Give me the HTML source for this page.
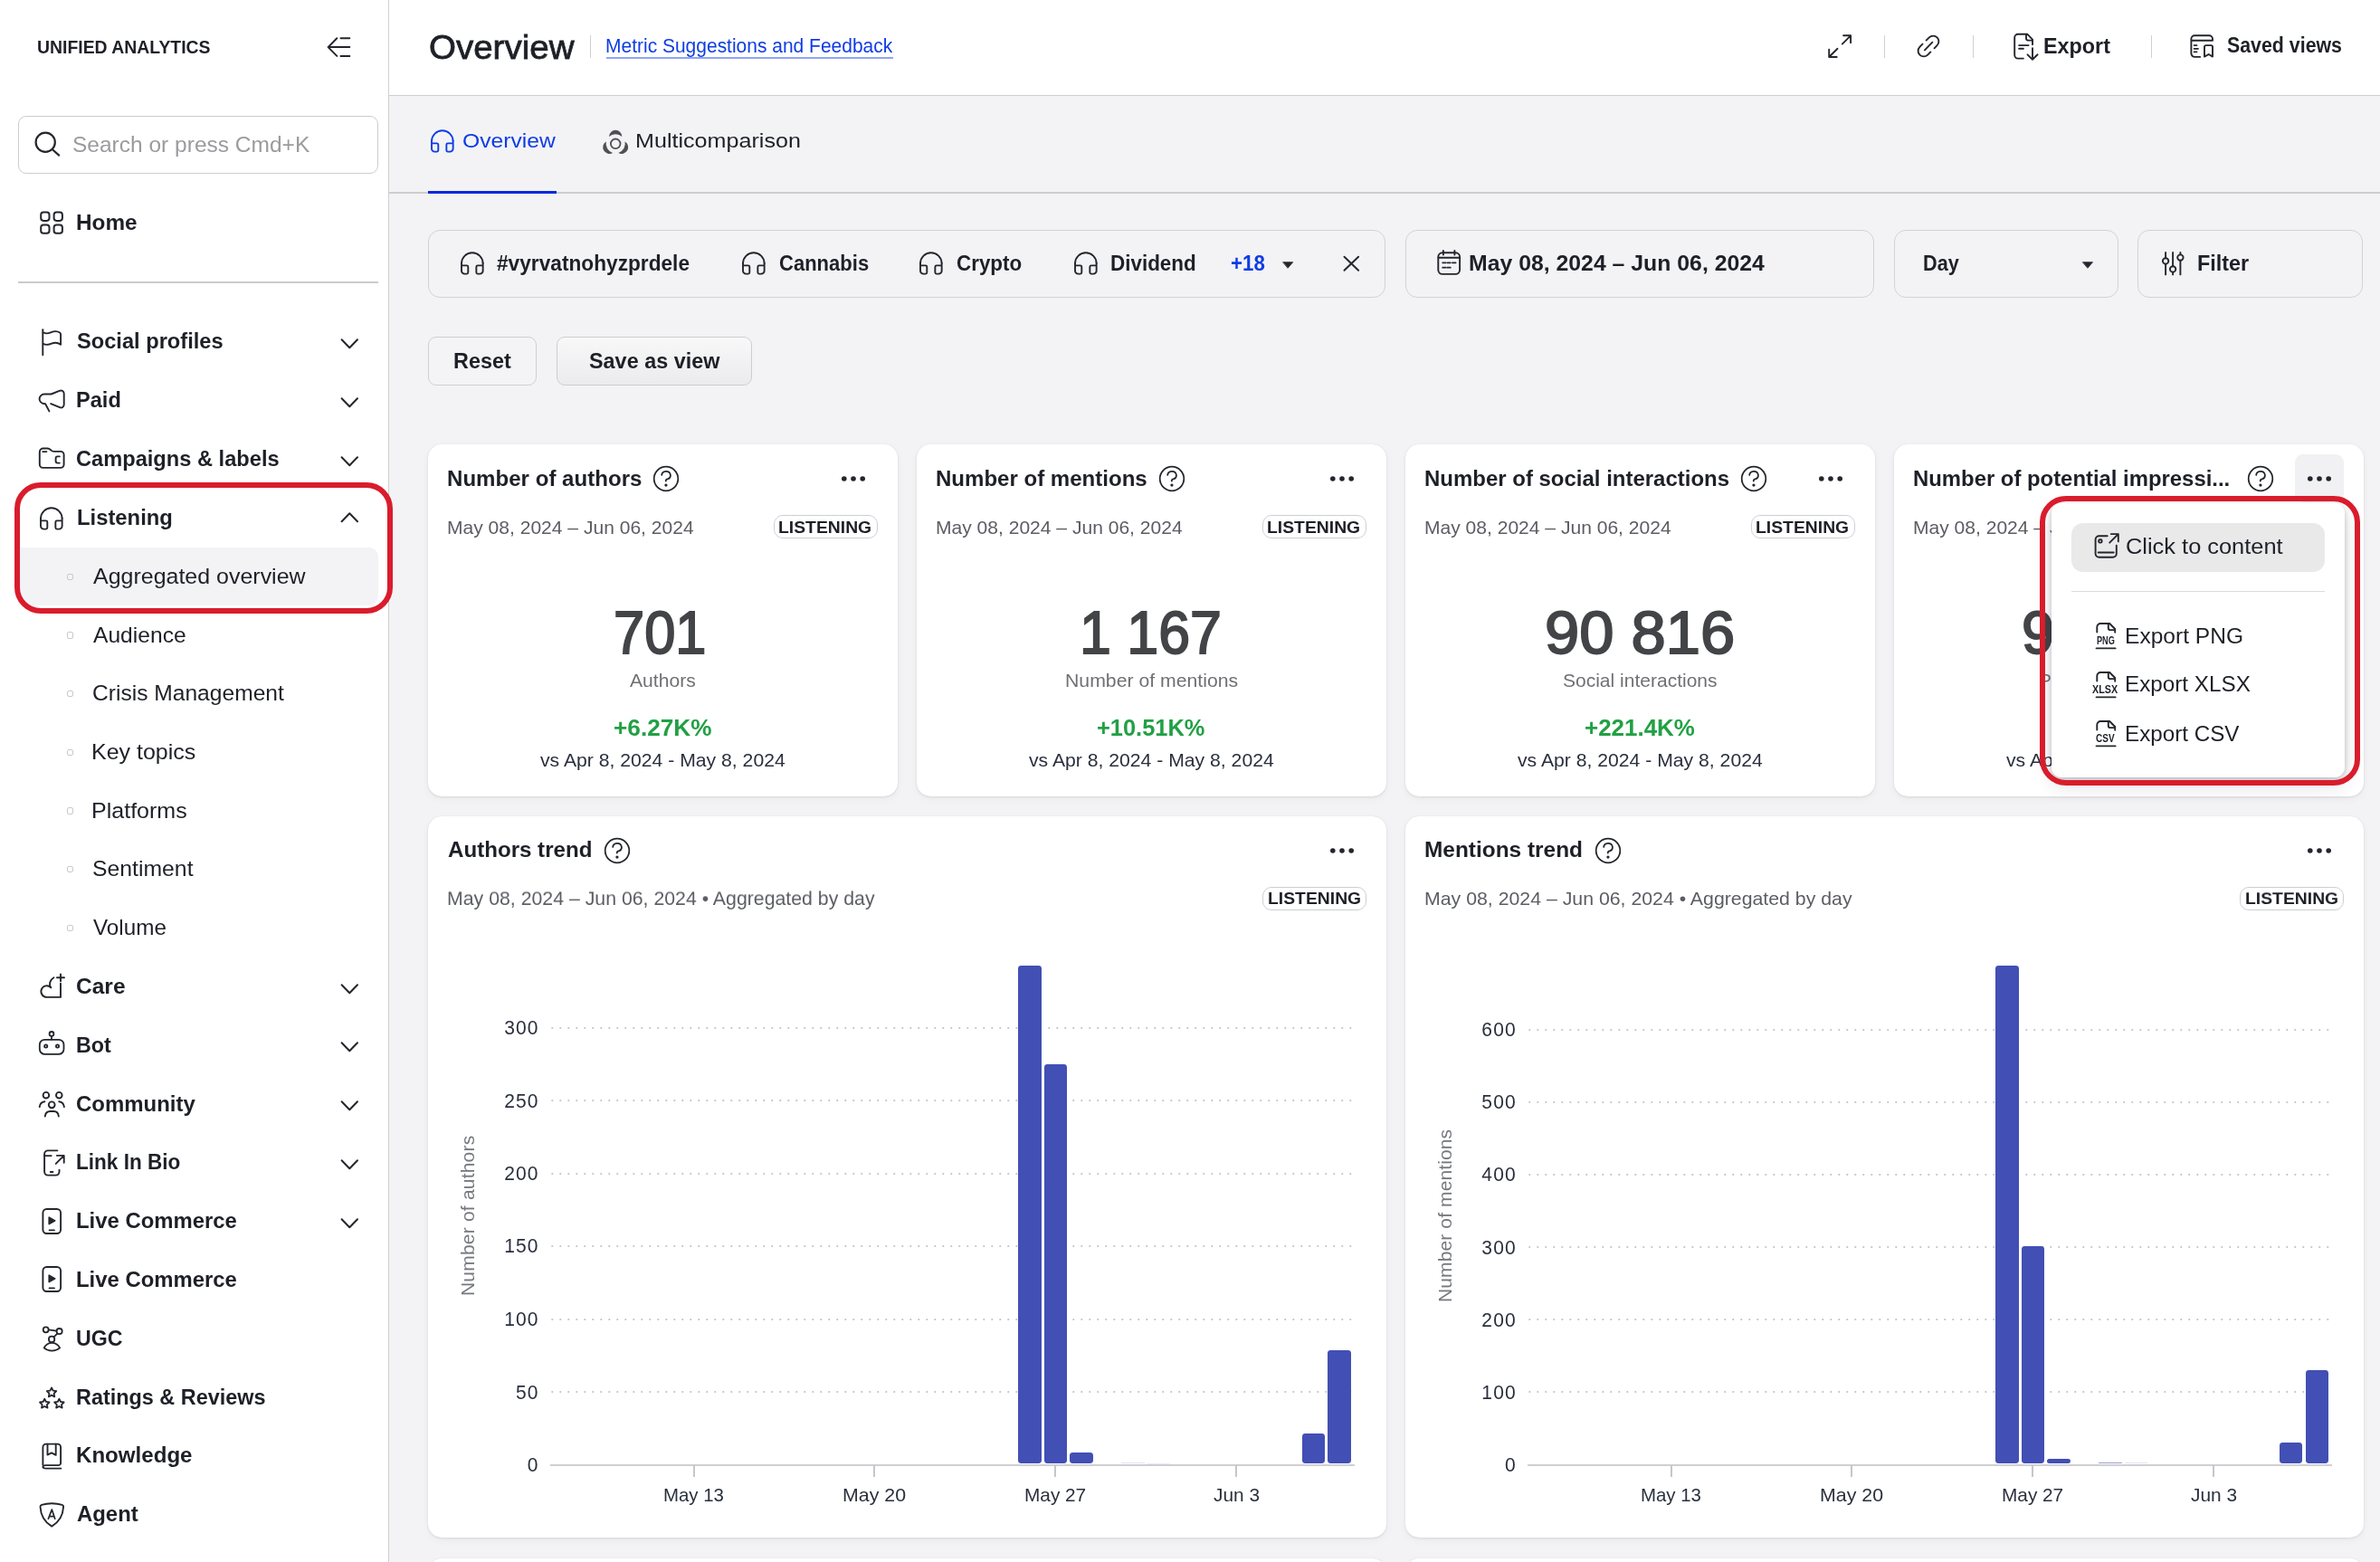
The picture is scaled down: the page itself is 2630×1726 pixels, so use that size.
<!DOCTYPE html>
<html><head><meta charset="utf-8"><title>Overview</title>
<style>
html,body{margin:0;padding:0;}
body{width:2630px;height:1726px;overflow:hidden;background:#f3f3f6;position:relative;font-family:"Liberation Sans",sans-serif;}
#root{position:absolute;left:0;top:0;width:2630px;height:1726px;overflow:hidden;will-change:transform;}
#root div,#root svg,#root span.t{position:absolute;}
span.t{white-space:nowrap;display:block;font-family:"Liberation Sans",sans-serif;}
svg{overflow:visible;}
.card{background:#fff;border-radius:15px;box-shadow:0 0 1px rgba(0,0,0,.14),0 1px 3px rgba(10,10,20,.09),0 3px 10px rgba(10,10,20,.04);}
</style></head><body><div id="root">
<div style="left:0.00px;top:0.00px;width:429.00px;height:1726.00px;background:#fff;"></div>
<div style="left:429.00px;top:0.00px;width:1.00px;height:1726.00px;background:#d0d0d0;"></div>
<div style="left:430.00px;top:0.00px;width:2200.00px;height:105.00px;background:#fff;"></div>
<div style="left:430.00px;top:105.00px;width:2200.00px;height:1.00px;background:#d0d0d0;"></div>
<div style="left:430.00px;top:212.00px;width:2200.00px;height:2.00px;background:#cdcdcd;"></div>
<div style="left:473.00px;top:211.00px;width:142.00px;height:3.00px;background:#0629de;"></div>
<span class="t" style="left:40.64px;top:42.00px;font-size:20.25px;line-height:20.25px;font-weight:700;color:#1e2027;transform:scale(0.9581,1.0000);transform-origin:0 17px;">UNIFIED ANALYTICS</span>
<svg style="left:360.00px;top:40.00px" width="30.00" height="25.00" viewBox="360.00 40.00 30.00 25.00" fill="none" stroke="#24262d" stroke-width="2" stroke-linecap="round" stroke-linejoin="round" ><path d="M362.6 52.1H386.3M372.3 42.3L362.6 52.1L372.3 61.9M376.5 42.3H386.3M376.5 61.9H386.3"/></svg>
<div style="left:20.20px;top:128.10px;width:397.40px;height:64.20px;box-sizing:border-box;border:1.3px solid #cdcdd1;border-radius:9px;background:#fff;"></div>
<svg style="left:36.00px;top:143.00px" width="32.00" height="32.00" viewBox="36.00 143.00 32.00 32.00" fill="none" stroke="#24262d" stroke-width="2.2" stroke-linecap="round" stroke-linejoin="round" ><circle cx="50.2" cy="157.2" r="10.6"/><path d="M58 165.2L65.2 171.6"/></svg>
<span class="t" style="left:79.74px;top:147.00px;font-size:25.50px;line-height:25.50px;font-weight:400;color:#9b9b9f;transform:scale(0.9613,0.9722);transform-origin:0 21px;">Search or press Cmd+K</span>
<svg style="left:42.00px;top:231.00px" width="30.00" height="30.00" viewBox="42.00 231.00 30.00 30.00" fill="none" stroke="#24262d" stroke-width="2" stroke-linecap="round" stroke-linejoin="round" ><rect x="45.2" y="234.6" width="9.3" height="9.3" rx="2.8"/><rect x="59.6" y="234.6" width="9.3" height="9.3" rx="2.8"/><rect x="45.2" y="248.4" width="9.3" height="9.3" rx="2.8"/><rect x="59.6" y="248.4" width="9.3" height="9.3" rx="2.8"/></svg>
<span class="t" style="left:84.12px;top:234.00px;font-size:24.75px;line-height:24.75px;font-weight:700;color:#1e2027;transform:scale(0.9836,1.0000);transform-origin:0 20px;">Home</span>
<div style="left:20.00px;top:311.00px;width:397.60px;height:2.00px;background:#cbcbcd;"></div>
<span class="t" style="left:85.10px;top:365.00px;font-size:24.75px;line-height:24.75px;font-weight:700;color:#1e2027;transform:scale(0.9554,1.0000);transform-origin:0 20px;">Social profiles</span>
<svg style="left:375.00px;top:371.50px" width="24.00" height="16.00" viewBox="375.00 371.50 24.00 16.00" fill="none" stroke="#24262d" stroke-width="2" stroke-linecap="round" stroke-linejoin="round" ><path d="M377.6 374.7L386.3 383.7L395 374.7"/></svg>
<span class="t" style="left:84.15px;top:430.00px;font-size:24.75px;line-height:24.75px;font-weight:700;color:#1e2027;transform:scale(0.9532,1.0000);transform-origin:0 20px;">Paid</span>
<svg style="left:375.00px;top:436.50px" width="24.00" height="16.00" viewBox="375.00 436.50 24.00 16.00" fill="none" stroke="#24262d" stroke-width="2" stroke-linecap="round" stroke-linejoin="round" ><path d="M377.6 439.7L386.3 448.7L395 439.7"/></svg>
<span class="t" style="left:84.15px;top:495.00px;font-size:24.75px;line-height:24.75px;font-weight:700;color:#1e2027;transform:scale(0.9549,1.0000);transform-origin:0 20px;">Campaigns &amp; labels</span>
<svg style="left:375.00px;top:501.50px" width="24.00" height="16.00" viewBox="375.00 501.50 24.00 16.00" fill="none" stroke="#24262d" stroke-width="2" stroke-linecap="round" stroke-linejoin="round" ><path d="M377.6 504.7L386.3 513.7L395 504.7"/></svg>
<span class="t" style="left:84.64px;top:560.00px;font-size:24.75px;line-height:24.75px;font-weight:700;color:#1e2027;transform:scale(0.9622,1.0000);transform-origin:0 20px;">Listening</span>
<svg style="left:375.00px;top:563.50px" width="24.00" height="16.00" viewBox="375.00 563.50 24.00 16.00" fill="none" stroke="#24262d" stroke-width="2" stroke-linecap="round" stroke-linejoin="round" ><path d="M377.6 575.7L386.3 566.7L395 575.7"/></svg>
<span class="t" style="left:84.21px;top:1078.00px;font-size:24.75px;line-height:24.75px;font-weight:700;color:#1e2027;transform:scale(0.9912,1.0000);transform-origin:0 20px;">Care</span>
<svg style="left:375.00px;top:1084.50px" width="24.00" height="16.00" viewBox="375.00 1084.50 24.00 16.00" fill="none" stroke="#24262d" stroke-width="2" stroke-linecap="round" stroke-linejoin="round" ><path d="M377.6 1087.7L386.3 1096.7L395 1087.7"/></svg>
<span class="t" style="left:84.26px;top:1143.00px;font-size:24.75px;line-height:24.75px;font-weight:700;color:#1e2027;transform:scale(0.9427,1.0000);transform-origin:0 20px;">Bot</span>
<svg style="left:375.00px;top:1149.30px" width="24.00" height="16.00" viewBox="375.00 1149.30 24.00 16.00" fill="none" stroke="#24262d" stroke-width="2" stroke-linecap="round" stroke-linejoin="round" ><path d="M377.6 1152.5L386.3 1161.5L395 1152.5"/></svg>
<span class="t" style="left:84.23px;top:1208.00px;font-size:24.75px;line-height:24.75px;font-weight:700;color:#1e2027;transform:scale(0.9685,1.0000);transform-origin:0 20px;">Community</span>
<svg style="left:375.00px;top:1214.10px" width="24.00" height="16.00" viewBox="375.00 1214.10 24.00 16.00" fill="none" stroke="#24262d" stroke-width="2" stroke-linecap="round" stroke-linejoin="round" ><path d="M377.6 1217.3L386.3 1226.3L395 1217.3"/></svg>
<span class="t" style="left:84.29px;top:1272.00px;font-size:24.75px;line-height:24.75px;font-weight:700;color:#1e2027;transform:scale(0.9117,1.0000);transform-origin:0 20px;">Link In Bio</span>
<svg style="left:375.00px;top:1278.90px" width="24.00" height="16.00" viewBox="375.00 1278.90 24.00 16.00" fill="none" stroke="#24262d" stroke-width="2" stroke-linecap="round" stroke-linejoin="round" ><path d="M377.6 1282.1000000000001L386.3 1291.1000000000001L395 1282.1000000000001"/></svg>
<span class="t" style="left:84.24px;top:1337.00px;font-size:24.75px;line-height:24.75px;font-weight:700;color:#1e2027;transform:scale(0.9646,1.0000);transform-origin:0 20px;">Live Commerce</span>
<svg style="left:375.00px;top:1343.70px" width="24.00" height="16.00" viewBox="375.00 1343.70 24.00 16.00" fill="none" stroke="#24262d" stroke-width="2" stroke-linecap="round" stroke-linejoin="round" ><path d="M377.6 1346.9L386.3 1355.9L395 1346.9"/></svg>
<span class="t" style="left:84.24px;top:1402.00px;font-size:24.75px;line-height:24.75px;font-weight:700;color:#1e2027;transform:scale(0.9646,1.0000);transform-origin:0 20px;">Live Commerce</span>
<span class="t" style="left:84.26px;top:1467.00px;font-size:24.75px;line-height:24.75px;font-weight:700;color:#1e2027;transform:scale(0.9367,1.0000);transform-origin:0 20px;">UGC</span>
<span class="t" style="left:84.25px;top:1532.00px;font-size:24.75px;line-height:24.75px;font-weight:700;color:#1e2027;transform:scale(0.9459,1.0000);transform-origin:0 20px;">Ratings &amp; Reviews</span>
<span class="t" style="left:84.23px;top:1596.00px;font-size:24.75px;line-height:24.75px;font-weight:700;color:#1e2027;transform:scale(0.9736,1.0000);transform-origin:0 20px;">Knowledge</span>
<span class="t" style="left:85.20px;top:1661.00px;font-size:24.75px;line-height:24.75px;font-weight:700;color:#1e2027;transform:scale(0.9660,1.0000);transform-origin:0 20px;">Agent</span>
<div style="left:20.00px;top:604.90px;width:397.90px;height:63.90px;background:#f3f3f6;border-radius:0 10px 10px 0;"></div>
<span class="t" style="left:103.30px;top:625.00px;font-size:24.50px;line-height:24.50px;font-weight:400;color:#1e2027;transform:scale(1.0192,1.0000);transform-origin:0 20px;">Aggregated overview</span>
<div style="left:74.00px;top:633.50px;width:7.00px;height:7.40px;box-sizing:border-box;border:1.2px solid #c6c6ca;border-radius:2.2px;"></div>
<span class="t" style="left:103.30px;top:690.00px;font-size:24.50px;line-height:24.50px;font-weight:400;color:#1e2027;transform:scale(1.0046,1.0000);transform-origin:0 20px;">Audience</span>
<div style="left:74.00px;top:698.20px;width:7.00px;height:7.40px;box-sizing:border-box;border:1.2px solid #c6c6ca;border-radius:2.2px;"></div>
<span class="t" style="left:102.30px;top:754.00px;font-size:24.50px;line-height:24.50px;font-weight:400;color:#1e2027;transform:scale(1.0036,1.0000);transform-origin:0 20px;">Crisis Management</span>
<div style="left:74.00px;top:762.90px;width:7.00px;height:7.40px;box-sizing:border-box;border:1.2px solid #c6c6ca;border-radius:2.2px;"></div>
<span class="t" style="left:101.26px;top:819.00px;font-size:24.50px;line-height:24.50px;font-weight:400;color:#1e2027;transform:scale(1.0201,1.0000);transform-origin:0 20px;">Key topics</span>
<div style="left:74.00px;top:827.60px;width:7.00px;height:7.40px;box-sizing:border-box;border:1.2px solid #c6c6ca;border-radius:2.2px;"></div>
<span class="t" style="left:101.26px;top:884.00px;font-size:24.50px;line-height:24.50px;font-weight:400;color:#1e2027;transform:scale(1.0216,1.0000);transform-origin:0 20px;">Platforms</span>
<div style="left:74.00px;top:892.30px;width:7.00px;height:7.40px;box-sizing:border-box;border:1.2px solid #c6c6ca;border-radius:2.2px;"></div>
<span class="t" style="left:102.29px;top:948.00px;font-size:24.50px;line-height:24.50px;font-weight:400;color:#1e2027;transform:scale(1.0109,1.0000);transform-origin:0 20px;">Sentiment</span>
<div style="left:74.00px;top:957.00px;width:7.00px;height:7.40px;box-sizing:border-box;border:1.2px solid #c6c6ca;border-radius:2.2px;"></div>
<span class="t" style="left:103.30px;top:1013.00px;font-size:24.50px;line-height:24.50px;font-weight:400;color:#1e2027;transform:scale(0.9902,1.0000);transform-origin:0 20px;">Volume</span>
<div style="left:74.00px;top:1021.70px;width:7.00px;height:7.40px;box-sizing:border-box;border:1.2px solid #c6c6ca;border-radius:2.2px;"></div>
<svg style="left:43.00px;top:362.00px" width="30.00" height="32.00" viewBox="43.00 362.00 30.00 32.00" fill="none" stroke="#24262d" stroke-width="1.9" stroke-linecap="round" stroke-linejoin="round" ><path d="M47.3 364.2V392.2"/><path d="M47.6 367.2C50 368.7 53 368.7 56 367.4C59.4 366 63.4 365.7 66 367.5Q67.1 368.3 67.1 369.7V380.8C64 378.4 60.4 378.2 57 379.6C53.6 381.2 50.4 381.2 47.6 379.8"/></svg>
<svg style="left:41.00px;top:429.00px" width="34.00" height="30.00" viewBox="41.00 429.00 34.00 30.00" fill="none" stroke="#24262d" stroke-width="1.9" stroke-linecap="round" stroke-linejoin="round" ><path d="M54.4 454.4L50.1 446.3C46 446 43.6 443.6 43.6 441C43.6 438 46 435.5 49 435.5H56.6L65.6 431.8C68.4 430.8 70.7 432.4 70.7 435V447C70.7 449.8 68.4 451.2 66 450.2L56.2 446.1"/></svg>
<svg style="left:41.00px;top:493.00px" width="33.00" height="28.00" viewBox="41.00 493.00 33.00 28.00" fill="none" stroke="#24262d" stroke-width="1.9" stroke-linecap="round" stroke-linejoin="round" ><path d="M43.8 499.5A4 4 0 0 1 47.8 495.5H52.4C54.4 495.5 55.2 496.4 56.2 497.4C57.2 498.4 58 498.9 59.6 498.9H67A3.6 3.6 0 0 1 70.6 502.5V513.3A3.6 3.6 0 0 1 67 516.9H47.4A3.6 3.6 0 0 1 43.8 513.3Z"/><path d="M47.2 499.1H51.4"/><path d="M65.8 504.4H63.6A2 2 0 0 0 61.6 506.4V509.6A2 2 0 0 0 63.6 511.6H65.8"/></svg>
<svg style="left:42.35px;top:557.80px" width="36.00" height="36.00" viewBox="42.35 557.80 36.00 36.00" fill="none" stroke="#24262d" stroke-width="1.9" stroke-linecap="round" stroke-linejoin="round" ><path d="M45.35 572.60A11.83 11.83 0 0 1 69.00 572.60"/><path d="M45.35 572.60V581.00A3.40 3.40 0 0 0 48.75 584.40H51.15A1.50 1.50 0 0 0 52.65 582.90V576.70A1.50 1.50 0 0 0 51.15 575.20H45.35"/><path d="M69.00 572.60V581.00A3.40 3.40 0 0 1 65.60 584.40H63.20A1.50 1.50 0 0 1 61.70 582.90V576.70A1.50 1.50 0 0 1 63.20 575.20H69.00"/></svg>
<svg style="left:42.00px;top:1074.00px" width="32.00" height="32.00" viewBox="42.00 1074.00 32.00 32.00" fill="none" stroke="#24262d" stroke-width="1.9" stroke-linecap="round" stroke-linejoin="round" ><path d="M67 1086.8V1101.9H51.8A6.3 6.3 0 1 1 56.2 1091.2"/><path d="M56.2 1091.2C54 1088.4 54.6 1083 59.4 1080.2"/><path d="M67 1076.4V1084.2M63 1080.2H71"/></svg>
<svg style="left:41.00px;top:1138.00px" width="33.00" height="30.00" viewBox="41.00 1138.00 33.00 30.00" fill="none" stroke="#24262d" stroke-width="1.8" stroke-linecap="round" stroke-linejoin="round" ><rect x="43.8" y="1148.8" width="26.7" height="16.1" rx="5.6"/><path d="M57 1148.6V1145.2"/><circle cx="57" cy="1142.4" r="2.4"/><circle cx="50.7" cy="1156" r="1.6"/><circle cx="63.5" cy="1156" r="1.6"/></svg>
<svg style="left:41.00px;top:1204.00px" width="33.00" height="33.00" viewBox="41.00 1204.00 33.00 33.00" fill="none" stroke="#24262d" stroke-width="1.9" stroke-linecap="round" stroke-linejoin="round" ><circle cx="50.9" cy="1210.2" r="3.3"/><circle cx="65.3" cy="1210.2" r="3.3"/><circle cx="57.2" cy="1220.8" r="3.4"/><path d="M49.8 1233.5C50.2 1230 52.4 1228 55.4 1228H59.6C62.6 1228 64.4 1230 64.8 1233.5"/><path d="M43.7 1223.1C44.1 1219.8 46.4 1217.6 49.4 1217.2"/><path d="M70.9 1223.1C70.5 1219.8 68.2 1217.6 65.2 1217.2"/></svg>
<svg style="left:45.00px;top:1269.00px" width="30.00" height="33.00" viewBox="45.00 1269.00 30.00 33.00" fill="none" stroke="#24262d" stroke-width="1.9" stroke-linecap="round" stroke-linejoin="round" ><path d="M63.4 1271.4H53A3.9 3.9 0 0 0 49.1 1275.3V1294.7A3.9 3.9 0 0 0 53 1298.6H61.6A3.9 3.9 0 0 0 65.5 1294.7V1292.7"/><path d="M49.1 1277.1H56.7M55.8 1295H58.4"/><path d="M62.9 1276.9H70.7V1284.7M70.7 1276.9L61.7 1285.9"/></svg>
<svg style="left:44.00px;top:1332.60px" width="28.00" height="34.00" viewBox="44.00 1332.60 28.00 34.00" fill="none" stroke="#24262d" stroke-width="1.9" stroke-linecap="round" stroke-linejoin="round" ><rect x="47.4" y="1335.6" width="19.7" height="27" rx="4.2"/><path d="M54.2 1344.8V1352.1999999999998L60.8 1348.5Z" fill="#24262d" stroke-width="1.6"/><path d="M54.6 1359.0H59.9"/></svg>
<svg style="left:44.00px;top:1397.40px" width="28.00" height="34.00" viewBox="44.00 1397.40 28.00 34.00" fill="none" stroke="#24262d" stroke-width="1.9" stroke-linecap="round" stroke-linejoin="round" ><rect x="47.4" y="1400.4" width="19.7" height="27" rx="4.2"/><path d="M54.2 1409.6000000000001V1417.0L60.8 1413.3000000000002Z" fill="#24262d" stroke-width="1.6"/><path d="M54.6 1423.8000000000002H59.9"/></svg>
<svg style="left:43.00px;top:1464.00px" width="30.00" height="32.00" viewBox="43.00 1464.00 30.00 32.00" fill="none" stroke="#24262d" stroke-width="1.8" stroke-linecap="round" stroke-linejoin="round" ><circle cx="57.1" cy="1479.9" r="3.2"/><path d="M48.6 1489.4C51 1485.4 54 1483.9 57.3 1483.9S63.8 1485.4 66.2 1489.4C63.6 1491.6 60.6 1492.6 57.3 1492.6S51.2 1491.6 48.6 1489.4Z"/><circle cx="50.7" cy="1469.3" r="3"/><circle cx="65.6" cy="1471.1" r="3.1"/><path d="M53.7 1469.4L62.5 1470.7"/><path d="M63.4 1473.6L59.7 1477.2"/></svg>
<svg style="left:41.00px;top:1531.00px" width="33.00" height="28.00" viewBox="41.00 1531.00 33.00 28.00" fill="none" stroke="#24262d" stroke-width="1.8" stroke-linecap="round" stroke-linejoin="round" ><polygon points="57.04,1533.40 58.66,1536.68 62.27,1537.20 59.66,1539.75 60.27,1543.35 57.04,1541.65 53.81,1543.35 54.42,1539.75 51.81,1537.20 55.42,1536.68"/><polygon points="49.26,1545.70 50.88,1548.98 54.49,1549.50 51.88,1552.05 52.49,1555.65 49.26,1553.95 46.03,1555.65 46.64,1552.05 44.03,1549.50 47.64,1548.98"/><polygon points="65.40,1545.70 67.02,1548.98 70.63,1549.50 68.02,1552.05 68.63,1555.65 65.40,1553.95 62.17,1555.65 62.78,1552.05 60.17,1549.50 63.78,1548.98"/></svg>
<svg style="left:44.00px;top:1592.00px" width="28.00" height="34.00" viewBox="44.00 1592.00 28.00 34.00" fill="none" stroke="#24262d" stroke-width="1.9" stroke-linecap="round" stroke-linejoin="round" ><path d="M47.4 1618.6V1599.2A3.6 3.6 0 0 1 51 1595.6H63.5A3.6 3.6 0 0 1 67.1 1599.2V1616.4A2.7 2.7 0 0 1 64.4 1619.1H50.6C48.4 1619.1 47.4 1619.6 47.4 1620.8S48.6 1622.6 50.8 1622.6H67.4"/><path d="M52.5 1595.8V1607.6L57 1605.4L61.7 1607.8V1595.8"/></svg>
<svg style="left:41.00px;top:1658.00px" width="33.00" height="32.00" viewBox="41.00 1658.00 33.00 32.00" fill="none" stroke="#24262d" stroke-width="1.9" stroke-linecap="round" stroke-linejoin="round" ><path d="M46 1662.9C50 1661.7 54 1661.3 57.3 1661.3S64.6 1661.7 68.7 1662.9Q70.3 1663.4 70.1 1665C69.6 1674 65 1682 57.2 1686.6C49.4 1682 45 1674 44.5 1665Q44.4 1663.4 46 1662.9Z"/><path d="M53.4 1678.2L57.3 1668.1L60.7 1678.2M55 1675.7H60" stroke-width="1.7"/></svg>
<div style="left:16.10px;top:532.80px;width:417.70px;height:145.20px;box-sizing:border-box;border:6.2px solid #d91c2c;border-radius:29px;"></div>
<span class="t" style="left:473.58px;top:34.00px;font-size:37.75px;line-height:37.75px;font-weight:400;color:#1e2027;transform:scale(1.0200,1.0000);transform-origin:0 31px;-webkit-text-stroke:0.8px #1e2027;">Overview</span>
<div style="left:652.00px;top:39.30px;width:1.20px;height:24.50px;background:#d0d0d4;"></div>
<span class="t" style="left:669.09px;top:41.00px;font-size:20.75px;line-height:20.75px;font-weight:400;color:#0e3ce4;transform:scale(1.0113,1.0214);transform-origin:0 17px;">Metric Suggestions and Feedback</span>
<div style="left:669.60px;top:62.90px;width:317.80px;height:1.70px;background:#8fa5f3;"></div>
<svg style="left:2018.00px;top:35.00px" width="32.00" height="32.00" viewBox="2018.00 35.00 32.00 32.00" fill="none" stroke="#24262d" stroke-width="1.9" stroke-linecap="round" stroke-linejoin="round" ><path d="M2037.1 39.3H2045.1V47.2M2045.1 39.3L2035.8 48.6"/><path d="M2021.2 54.8V63H2029.7M2021.2 63L2030.5 53.8"/></svg>
<div style="left:2082.00px;top:39.20px;width:1.20px;height:24.70px;background:#d0d0d4;"></div>
<svg style="left:2116.00px;top:36.00px" width="32.00" height="32.00" viewBox="2116.00 36.00 32.00 32.00" fill="none" stroke="#24262d" stroke-width="1.9" stroke-linecap="round" stroke-linejoin="round" ><path d="M2128.6 44.6L2131.8 41.4A6.2 6.2 0 0 1 2140.6 50.2L2137.5 53.3"/><path d="M2133.4 57.4L2130.2 60.6A6.2 6.2 0 0 1 2121.4 51.8L2124.5 48.7"/><path d="M2126.9 55.4L2135.4 46.7"/></svg>
<div style="left:2180.00px;top:39.20px;width:1.20px;height:24.70px;background:#d0d0d4;"></div>
<svg style="left:2222.00px;top:35.00px" width="32.00" height="34.00" viewBox="2222.00 35.00 32.00 34.00" fill="none" stroke="#24262d" stroke-width="1.9" stroke-linecap="round" stroke-linejoin="round" ><path d="M2235.9 64.6H2230A3.8 3.8 0 0 1 2226.2 60.8V41.5A3.8 3.8 0 0 1 2230 37.7H2240.2L2246 43.6V49.2"/><path d="M2239 37.9V42.4A2.2 2.2 0 0 0 2241.2 44.6H2245.6"/><path d="M2231.1 50.1H2241.6M2231.1 53.8H2235.9"/><path d="M2246 53.2V65.6M2240.5 60.3L2246 65.8L2251.6 60.3"/></svg>
<span class="t" style="left:2257.95px;top:39.00px;font-size:24.50px;line-height:24.50px;font-weight:700;color:#1e2027;transform:scale(0.9525,1.0000);transform-origin:0 20px;">Export</span>
<div style="left:2376.90px;top:39.20px;width:1.20px;height:24.70px;background:#d0d0d4;"></div>
<svg style="left:2418.00px;top:35.00px" width="32.00" height="32.00" viewBox="2418.00 35.00 32.00 32.00" fill="none" stroke="#24262d" stroke-width="1.9" stroke-linecap="round" stroke-linejoin="round" ><path d="M2431.2 62.9H2425.2A3.8 3.8 0 0 1 2421.4 59.1V43A3.8 3.8 0 0 1 2425.2 39.2H2441.2A3.8 3.8 0 0 1 2445 43V44.7H2421.4"/><path d="M2424.6 50.1H2427.5M2424.6 53.8H2429M2424.6 57.3H2427.5" stroke-width="1.8"/><path d="M2436 62.6V51.9A1.8 1.8 0 0 1 2437.8 50.1H2443.2A1.8 1.8 0 0 1 2445 51.9V62.6L2440.7 60L2436 62.6Z"/></svg>
<span class="t" style="left:2460.60px;top:40.00px;font-size:22.50px;line-height:22.50px;font-weight:700;color:#1e2027;transform:scale(0.9488,1.0267);transform-origin:0 18px;">Saved views</span>
<svg style="left:474.10px;top:141.10px" width="36.00" height="36.00" viewBox="474.10 141.10 36.00 36.00" fill="none" stroke="#0e3ce4" stroke-width="1.9" stroke-linecap="round" stroke-linejoin="round" ><path d="M477.10 155.90A11.83 11.83 0 0 1 500.75 155.90"/><path d="M477.10 155.90V164.30A3.40 3.40 0 0 0 480.50 167.70H482.90A1.50 1.50 0 0 0 484.40 166.20V160.00A1.50 1.50 0 0 0 482.90 158.50H477.10"/><path d="M500.75 155.90V164.30A3.40 3.40 0 0 1 497.35 167.70H494.95A1.50 1.50 0 0 1 493.45 166.20V160.00A1.50 1.50 0 0 1 494.95 158.50H500.75"/></svg>
<span class="t" style="left:511.14px;top:144.00px;font-size:23.25px;line-height:23.25px;font-weight:400;color:#0e3ce4;transform:scale(1.0603,0.9412);transform-origin:0 19px;">Overview</span>
<svg style="left:663px;top:141px" width="36" height="34" viewBox="663 141 36 34"><g transform="translate(680.2 158.8)"><circle r="5.3" fill="none" stroke="#4f5056" stroke-width="1.8"/><path d="M-7.2 -7.78A7.2 7.2 0 0 1 7.2 -7.78A10.6 10.6 0 0 0 -7.2 -7.78Z" fill="#4f5056"/><path d="M-7.2 -7.78A7.2 7.2 0 0 1 7.2 -7.78A10.6 10.6 0 0 0 -7.2 -7.78Z" fill="#4f5056" transform="rotate(120)"/><path d="M-7.2 -7.78A7.2 7.2 0 0 1 7.2 -7.78A10.6 10.6 0 0 0 -7.2 -7.78Z" fill="#4f5056" transform="rotate(240)"/></g></svg>
<span class="t" style="left:701.73px;top:144.00px;font-size:23.50px;line-height:23.50px;font-weight:400;color:#1e2027;transform:scale(1.0691,0.9471);transform-origin:0 19px;">Multicomparison</span>
<div style="left:473.30px;top:254.30px;width:1058.20px;height:74.40px;box-sizing:border-box;border:1.3px solid #d2d2d6;border-radius:13px;"></div>
<div style="left:1553.30px;top:254.30px;width:518.00px;height:74.40px;box-sizing:border-box;border:1.3px solid #d2d2d6;border-radius:13px;"></div>
<div style="left:2093.30px;top:254.30px;width:248.20px;height:74.40px;box-sizing:border-box;border:1.3px solid #d2d2d6;border-radius:13px;"></div>
<div style="left:2362.30px;top:254.30px;width:249.20px;height:74.40px;box-sizing:border-box;border:1.3px solid #d2d2d6;border-radius:13px;"></div>
<svg style="left:507.35px;top:276.30px" width="36.00" height="36.00" viewBox="507.35 276.30 36.00 36.00" fill="none" stroke="#24262d" stroke-width="1.9" stroke-linecap="round" stroke-linejoin="round" ><path d="M510.35 291.10A11.83 11.83 0 0 1 534.00 291.10"/><path d="M510.35 291.10V299.50A3.40 3.40 0 0 0 513.75 302.90H516.15A1.50 1.50 0 0 0 517.65 301.40V295.20A1.50 1.50 0 0 0 516.15 293.70H510.35"/><path d="M534.00 291.10V299.50A3.40 3.40 0 0 1 530.60 302.90H528.20A1.50 1.50 0 0 1 526.70 301.40V295.20A1.50 1.50 0 0 1 528.20 293.70H534.00"/></svg>
<span class="t" style="left:549.30px;top:280.00px;font-size:22.75px;line-height:22.75px;font-weight:700;color:#1e2027;transform:scale(0.9970,1.0467);transform-origin:0 19px;">#vyrvatnohyzprdele</span>
<svg style="left:817.95px;top:276.30px" width="36.00" height="36.00" viewBox="817.95 276.30 36.00 36.00" fill="none" stroke="#24262d" stroke-width="1.9" stroke-linecap="round" stroke-linejoin="round" ><path d="M820.95 291.10A11.83 11.83 0 0 1 844.60 291.10"/><path d="M820.95 291.10V299.50A3.40 3.40 0 0 0 824.35 302.90H826.75A1.50 1.50 0 0 0 828.25 301.40V295.20A1.50 1.50 0 0 0 826.75 293.70H820.95"/><path d="M844.60 291.10V299.50A3.40 3.40 0 0 1 841.20 302.90H838.80A1.50 1.50 0 0 1 837.30 301.40V295.20A1.50 1.50 0 0 1 838.80 293.70H844.60"/></svg>
<span class="t" style="left:860.50px;top:280.00px;font-size:22.75px;line-height:22.75px;font-weight:700;color:#1e2027;transform:scale(0.9681,1.0467);transform-origin:0 19px;">Cannabis</span>
<svg style="left:1014.35px;top:276.30px" width="36.00" height="36.00" viewBox="1014.35 276.30 36.00 36.00" fill="none" stroke="#24262d" stroke-width="1.9" stroke-linecap="round" stroke-linejoin="round" ><path d="M1017.35 291.10A11.83 11.83 0 0 1 1041.00 291.10"/><path d="M1017.35 291.10V299.50A3.40 3.40 0 0 0 1020.75 302.90H1023.15A1.50 1.50 0 0 0 1024.65 301.40V295.20A1.50 1.50 0 0 0 1023.15 293.70H1017.35"/><path d="M1041.00 291.10V299.50A3.40 3.40 0 0 1 1037.60 302.90H1035.20A1.50 1.50 0 0 1 1033.70 301.40V295.20A1.50 1.50 0 0 1 1035.20 293.70H1041.00"/></svg>
<span class="t" style="left:1056.70px;top:280.00px;font-size:22.75px;line-height:22.75px;font-weight:700;color:#1e2027;transform:scale(0.9849,1.0467);transform-origin:0 19px;">Crypto</span>
<svg style="left:1185.25px;top:276.30px" width="36.00" height="36.00" viewBox="1185.25 276.30 36.00 36.00" fill="none" stroke="#24262d" stroke-width="1.9" stroke-linecap="round" stroke-linejoin="round" ><path d="M1188.25 291.10A11.83 11.83 0 0 1 1211.90 291.10"/><path d="M1188.25 291.10V299.50A3.40 3.40 0 0 0 1191.65 302.90H1194.05A1.50 1.50 0 0 0 1195.55 301.40V295.20A1.50 1.50 0 0 0 1194.05 293.70H1188.25"/><path d="M1211.90 291.10V299.50A3.40 3.40 0 0 1 1208.50 302.90H1206.10A1.50 1.50 0 0 1 1204.60 301.40V295.20A1.50 1.50 0 0 1 1206.10 293.70H1211.90"/></svg>
<span class="t" style="left:1226.71px;top:280.00px;font-size:22.75px;line-height:22.75px;font-weight:700;color:#1e2027;transform:scale(0.9865,1.0467);transform-origin:0 19px;">Dividend</span>
<span class="t" style="left:1360.20px;top:280.00px;font-size:22.75px;line-height:22.75px;font-weight:700;color:#0e3ce4;transform:scale(0.9805,1.0467);transform-origin:0 19px;">+18</span>
<svg style="left:1415.00px;top:288.00px" width="18.00" height="12.00" viewBox="1415.00 288.00 18.00 12.00" fill="none" stroke="#24262d" stroke-width="2" stroke-linecap="round" stroke-linejoin="round" ><path d="M1417.9 289.7H1428.7L1423.3 296Z" fill="#24262d" stroke-width="0.8"/></svg>
<svg style="left:1482.00px;top:281.00px" width="24.00" height="24.00" viewBox="1482.00 281.00 24.00 24.00" fill="none" stroke="#24262d" stroke-width="2" stroke-linecap="round" stroke-linejoin="round" ><path d="M1485.5 283.7L1501.1 298.7M1501.1 283.7L1485.5 298.7"/></svg>
<svg style="left:1585.00px;top:275.00px" width="32.00" height="32.00" viewBox="1585.00 275.00 32.00 32.00" fill="none" stroke="#24262d" stroke-width="1.9" stroke-linecap="round" stroke-linejoin="round" ><rect x="1589.3" y="279.3" width="23.8" height="23.6" rx="4.6"/><path d="M1589.5 284.8H1612.9"/><path d="M1594.9 277V281.5M1607.4 277V281.5"/><path d="M1594.2 290.3H1597.6M1599.4 290.3H1602.8M1604.9 290.3H1608.6M1594.2 295.7H1597.6M1599.4 295.7H1602.8" stroke-width="1.8"/></svg>
<span class="t" style="left:1622.77px;top:279.00px;font-size:24.00px;line-height:24.00px;font-weight:700;color:#1e2027;transform:scale(1.0336,0.9706);transform-origin:0 20px;">May 08, 2024 – Jun 06, 2024</span>
<span class="t" style="left:2125.30px;top:279.00px;font-size:24.00px;line-height:24.00px;font-weight:700;color:#1e2027;transform:scale(0.9020,0.9706);transform-origin:0 20px;">Day</span>
<svg style="left:2299.00px;top:288.00px" width="18.00" height="12.00" viewBox="2299.00 288.00 18.00 12.00" fill="none" stroke="#24262d" stroke-width="2" stroke-linecap="round" stroke-linejoin="round" ><path d="M2301.7 289.7H2312.5L2307.1 296Z" fill="#24262d" stroke-width="0.8"/></svg>
<svg style="left:2386.00px;top:275.00px" width="32.00" height="32.00" viewBox="2386.00 275.00 32.00 32.00" fill="none" stroke="#24262d" stroke-width="1.9" stroke-linecap="round" stroke-linejoin="round" ><path d="M2393.1 278.9V285.2M2393.1 291.6V303.4"/><circle cx="2393.1" cy="288.4" r="3.2"/><path d="M2401.1 278.9V294.2M2401.1 300.6V303.4"/><circle cx="2401.1" cy="297.4" r="3.2"/><path d="M2409.4 278.9V281.4M2409.4 287.8V303.4"/><circle cx="2409.4" cy="284.6" r="3.2"/></svg>
<span class="t" style="left:2428.43px;top:279.00px;font-size:24.00px;line-height:24.00px;font-weight:700;color:#1e2027;transform:scale(0.9750,0.9706);transform-origin:0 20px;">Filter</span>
<div style="left:473.30px;top:372.20px;width:120.20px;height:53.40px;box-sizing:border-box;border:1.3px solid #cfcfd3;border-radius:9px;background:#f4f4f6;"></div>
<span class="t" style="left:501.23px;top:387.00px;font-size:24.00px;line-height:24.00px;font-weight:700;color:#1e2027;transform:scale(0.9740,0.9706);transform-origin:0 20px;">Reset</span>
<div style="left:615.30px;top:372.20px;width:215.30px;height:53.40px;box-sizing:border-box;border:1.3px solid #cdcdd1;border-radius:9px;background:linear-gradient(#f8f8f9,#ebebed);"></div>
<span class="t" style="left:650.90px;top:387.00px;font-size:24.00px;line-height:24.00px;font-weight:700;color:#1e2027;transform:scale(0.9748,0.9706);transform-origin:0 20px;">Save as view</span>
<div class="card" style="left:473px;top:491px;width:518.6px;height:388.8px;"></div>
<span class="t" style="left:494.33px;top:517.00px;font-size:24.75px;line-height:24.75px;font-weight:700;color:#1e2027;transform:scale(0.9730,1.0000);transform-origin:0 20px;">Number of authors</span>
<svg style="left:720.30px;top:513.10px" width="32.00" height="32.00" viewBox="720.30 513.10 32.00 32.00" fill="none" stroke="#24262d" stroke-width="2" stroke-linecap="round" stroke-linejoin="round" ><circle cx="736.3" cy="529.1" r="13.3" stroke-width="1.75"/><path d="M731.5 525.0A4.85 4.4 0 1 1 737.9 529.45Q736.0 529.7 736.05 531.7" stroke-width="1.8"/><circle cx="736.25" cy="536.2" r="1.65" fill="#24262d" stroke="none"/></svg>
<svg style="left:928.40px;top:524.40px" width="32.00" height="10.00" viewBox="928.40 524.40 32.00 10.00" fill="none" stroke="#24262d" stroke-width="2" stroke-linecap="round" stroke-linejoin="round" ><circle cx="933.1999999999999" cy="529.4" r="2.8" fill="#24262d" stroke="none"/><circle cx="943.4" cy="529.4" r="2.8" fill="#24262d" stroke="none"/><circle cx="953.6" cy="529.4" r="2.8" fill="#24262d" stroke="none"/></svg>
<span class="t" style="left:494.31px;top:573.00px;font-size:21.25px;line-height:21.25px;font-weight:400;color:#5b5d63;transform:scale(0.9903,0.9733);transform-origin:0 17px;">May 08, 2024 – Jun 06, 2024</span>
<div style="left:854.70px;top:569.30px;width:114.90px;height:26.20px;box-sizing:border-box;border:1.2px solid #cfcfd3;border-radius:10px;background:#fff;"></div>
<span class="t" style="left:860.25px;top:574.00px;font-size:18.50px;line-height:18.50px;font-weight:700;color:#1e2027;transform:scale(1.0454,0.9769);transform-origin:0 15px;">LISTENING</span>
<span class="t" style="left:678.41px;top:666.00px;font-size:66.00px;line-height:66.00px;font-weight:400;color:#434447;transform:scale(0.9309,1.0000);transform-origin:0 56px;-webkit-text-stroke:1.9px #434447;">701</span>
<span class="t" style="left:696.20px;top:742.00px;font-size:21.25px;line-height:21.25px;font-weight:400;color:#707074;transform:scale(0.9944,0.9800);transform-origin:0 17px;">Authors</span>
<span class="t" style="left:677.70px;top:791.00px;font-size:26.25px;line-height:26.25px;font-weight:700;color:#22a045;transform:scale(0.9984,1.0000);transform-origin:0 22px;">+6.27K%</span>
<span class="t" style="left:596.50px;top:830.00px;font-size:20.25px;line-height:20.25px;font-weight:400;color:#2a2f3d;transform:scale(1.0456,1.0000);transform-origin:0 17px;">vs Apr 8, 2024 - May 8, 2024</span>
<div class="card" style="left:1013px;top:491px;width:518.6px;height:388.8px;"></div>
<span class="t" style="left:1034.33px;top:517.00px;font-size:24.75px;line-height:24.75px;font-weight:700;color:#1e2027;transform:scale(0.9712,1.0000);transform-origin:0 20px;">Number of mentions</span>
<svg style="left:1278.60px;top:513.10px" width="32.00" height="32.00" viewBox="1278.60 513.10 32.00 32.00" fill="none" stroke="#24262d" stroke-width="2" stroke-linecap="round" stroke-linejoin="round" ><circle cx="1294.6" cy="529.1" r="13.3" stroke-width="1.75"/><path d="M1289.8 525.0A4.85 4.4 0 1 1 1296.1999999999998 529.45Q1294.3 529.7 1294.35 531.7" stroke-width="1.8"/><circle cx="1294.55" cy="536.2" r="1.65" fill="#24262d" stroke="none"/></svg>
<svg style="left:1468.40px;top:524.40px" width="32.00" height="10.00" viewBox="1468.40 524.40 32.00 10.00" fill="none" stroke="#24262d" stroke-width="2" stroke-linecap="round" stroke-linejoin="round" ><circle cx="1473.2" cy="529.4" r="2.8" fill="#24262d" stroke="none"/><circle cx="1483.4" cy="529.4" r="2.8" fill="#24262d" stroke="none"/><circle cx="1493.6000000000001" cy="529.4" r="2.8" fill="#24262d" stroke="none"/></svg>
<span class="t" style="left:1034.31px;top:573.00px;font-size:21.25px;line-height:21.25px;font-weight:400;color:#5b5d63;transform:scale(0.9903,0.9733);transform-origin:0 17px;">May 08, 2024 – Jun 06, 2024</span>
<div style="left:1394.70px;top:569.30px;width:114.90px;height:26.20px;box-sizing:border-box;border:1.2px solid #cfcfd3;border-radius:10px;background:#fff;"></div>
<span class="t" style="left:1400.25px;top:574.00px;font-size:18.50px;line-height:18.50px;font-weight:700;color:#1e2027;transform:scale(1.0454,0.9769);transform-origin:0 15px;">LISTENING</span>
<span class="t" style="left:1192.75px;top:666.00px;font-size:66.00px;line-height:66.00px;font-weight:400;color:#434447;transform:scale(0.9501,1.0000);transform-origin:0 56px;-webkit-text-stroke:1.9px #434447;">1 167</span>
<span class="t" style="left:1176.50px;top:742.00px;font-size:21.25px;line-height:21.25px;font-weight:400;color:#707074;transform:scale(0.9994,0.9800);transform-origin:0 17px;">Number of mentions</span>
<span class="t" style="left:1212.33px;top:791.00px;font-size:26.25px;line-height:26.25px;font-weight:700;color:#22a045;transform:scale(0.9674,1.0000);transform-origin:0 22px;">+10.51K%</span>
<span class="t" style="left:1136.50px;top:830.00px;font-size:20.25px;line-height:20.25px;font-weight:400;color:#2a2f3d;transform:scale(1.0456,1.0000);transform-origin:0 17px;">vs Apr 8, 2024 - May 8, 2024</span>
<div class="card" style="left:1553px;top:491px;width:518.6px;height:388.8px;"></div>
<span class="t" style="left:1574.33px;top:517.00px;font-size:24.75px;line-height:24.75px;font-weight:700;color:#1e2027;transform:scale(0.9686,1.0000);transform-origin:0 20px;">Number of social interactions</span>
<svg style="left:1921.90px;top:513.10px" width="32.00" height="32.00" viewBox="1921.90 513.10 32.00 32.00" fill="none" stroke="#24262d" stroke-width="2" stroke-linecap="round" stroke-linejoin="round" ><circle cx="1937.9" cy="529.1" r="13.3" stroke-width="1.75"/><path d="M1933.1000000000001 525.0A4.85 4.4 0 1 1 1939.5 529.45Q1937.6000000000001 529.7 1937.65 531.7" stroke-width="1.8"/><circle cx="1937.8500000000001" cy="536.2" r="1.65" fill="#24262d" stroke="none"/></svg>
<svg style="left:2008.40px;top:524.40px" width="32.00" height="10.00" viewBox="2008.40 524.40 32.00 10.00" fill="none" stroke="#24262d" stroke-width="2" stroke-linecap="round" stroke-linejoin="round" ><circle cx="2013.2" cy="529.4" r="2.8" fill="#24262d" stroke="none"/><circle cx="2023.4" cy="529.4" r="2.8" fill="#24262d" stroke="none"/><circle cx="2033.6000000000001" cy="529.4" r="2.8" fill="#24262d" stroke="none"/></svg>
<span class="t" style="left:1574.31px;top:573.00px;font-size:21.25px;line-height:21.25px;font-weight:400;color:#5b5d63;transform:scale(0.9903,0.9733);transform-origin:0 17px;">May 08, 2024 – Jun 06, 2024</span>
<div style="left:1934.70px;top:569.30px;width:114.90px;height:26.20px;box-sizing:border-box;border:1.2px solid #cfcfd3;border-radius:10px;background:#fff;"></div>
<span class="t" style="left:1940.25px;top:574.00px;font-size:18.50px;line-height:18.50px;font-weight:700;color:#1e2027;transform:scale(1.0454,0.9769);transform-origin:0 15px;">LISTENING</span>
<span class="t" style="left:1707.08px;top:666.00px;font-size:66.00px;line-height:66.00px;font-weight:400;color:#434447;transform:scale(1.0410,1.0000);transform-origin:0 56px;-webkit-text-stroke:1.9px #434447;">90 816</span>
<span class="t" style="left:1727.35px;top:742.00px;font-size:21.25px;line-height:21.25px;font-weight:400;color:#707074;transform:scale(0.9888,0.9800);transform-origin:0 17px;">Social interactions</span>
<span class="t" style="left:1751.01px;top:791.00px;font-size:26.25px;line-height:26.25px;font-weight:700;color:#22a045;transform:scale(0.9887,1.0000);transform-origin:0 22px;">+221.4K%</span>
<span class="t" style="left:1676.50px;top:830.00px;font-size:20.25px;line-height:20.25px;font-weight:400;color:#2a2f3d;transform:scale(1.0456,1.0000);transform-origin:0 17px;">vs Apr 8, 2024 - May 8, 2024</span>
<div class="card" style="left:2093px;top:491px;width:518.6px;height:388.8px;"></div>
<span class="t" style="left:2114.34px;top:517.00px;font-size:24.75px;line-height:24.75px;font-weight:700;color:#1e2027;transform:scale(0.9646,1.0000);transform-origin:0 20px;">Number of potential impressi...</span>
<svg style="left:2482.20px;top:513.10px" width="32.00" height="32.00" viewBox="2482.20 513.10 32.00 32.00" fill="none" stroke="#24262d" stroke-width="2" stroke-linecap="round" stroke-linejoin="round" ><circle cx="2498.2" cy="529.1" r="13.3" stroke-width="1.75"/><path d="M2493.3999999999996 525.0A4.85 4.4 0 1 1 2499.7999999999997 529.45Q2497.8999999999996 529.7 2497.95 531.7" stroke-width="1.8"/><circle cx="2498.1499999999996" cy="536.2" r="1.65" fill="#24262d" stroke="none"/></svg>
<div style="left:2535.50px;top:502.00px;width:54.20px;height:53.00px;background:#f1f1f3;border-radius:9px;"></div>
<svg style="left:2548.00px;top:524.40px" width="32.00" height="10.00" viewBox="2548.00 524.40 32.00 10.00" fill="none" stroke="#24262d" stroke-width="2" stroke-linecap="round" stroke-linejoin="round" ><circle cx="2552.8" cy="529.4" r="2.8" fill="#24262d" stroke="none"/><circle cx="2563" cy="529.4" r="2.8" fill="#24262d" stroke="none"/><circle cx="2573.2" cy="529.4" r="2.8" fill="#24262d" stroke="none"/></svg>
<span class="t" style="left:2114.31px;top:573.00px;font-size:21.25px;line-height:21.25px;font-weight:400;color:#5b5d63;transform:scale(0.9903,0.9733);transform-origin:0 17px;">May 08, 2024 – Jun 06, 2024</span>
<div style="left:2474.70px;top:569.30px;width:114.90px;height:26.20px;box-sizing:border-box;border:1.2px solid #cfcfd3;border-radius:10px;background:#fff;"></div>
<span class="t" style="left:2480.25px;top:574.00px;font-size:18.50px;line-height:18.50px;font-weight:700;color:#1e2027;transform:scale(1.0454,0.9769);transform-origin:0 15px;">LISTENING</span>
<span class="t" style="left:2234.13px;top:666.00px;font-size:66.00px;line-height:66.00px;font-weight:400;color:#434447;transform:scale(0.9894,1.0000);transform-origin:0 56px;-webkit-text-stroke:1.9px #434447;">938 406</span>
<span class="t" style="left:2253.32px;top:742.00px;font-size:21.25px;line-height:21.25px;font-weight:400;color:#707074;transform:scale(0.9783,0.9800);transform-origin:0 17px;">Potential impressions</span>
<span class="t" style="left:2295.28px;top:791.00px;font-size:26.25px;line-height:26.25px;font-weight:700;color:#22a045;transform:scale(1.0155,1.0000);transform-origin:0 22px;">+1.07M%</span>
<span class="t" style="left:2216.50px;top:830.00px;font-size:20.25px;line-height:20.25px;font-weight:400;color:#2a2f3d;transform:scale(1.0456,1.0000);transform-origin:0 17px;">vs Apr 8, 2024 - May 8, 2024</span>
<div class="card" style="left:473px;top:901.6px;width:1058.6px;height:797.9px;"></div>
<div class="card" style="left:473px;top:1722px;width:1058.6px;height:60px;"></div>
<span class="t" style="left:495.30px;top:927.00px;font-size:24.75px;line-height:24.75px;font-weight:700;color:#1e2027;transform:scale(0.9742,1.0000);transform-origin:0 20px;">Authors trend</span>
<svg style="left:666.10px;top:923.60px" width="32.00" height="32.00" viewBox="666.10 923.60 32.00 32.00" fill="none" stroke="#24262d" stroke-width="2" stroke-linecap="round" stroke-linejoin="round" ><circle cx="682.1" cy="939.6" r="13.3" stroke-width="1.75"/><path d="M677.3000000000001 935.5A4.85 4.4 0 1 1 683.7 939.95Q681.8000000000001 940.2 681.85 942.2" stroke-width="1.8"/><circle cx="682.0500000000001" cy="946.7" r="1.65" fill="#24262d" stroke="none"/></svg>
<svg style="left:1468.40px;top:934.60px" width="32.00" height="10.00" viewBox="1468.40 934.60 32.00 10.00" fill="none" stroke="#24262d" stroke-width="2" stroke-linecap="round" stroke-linejoin="round" ><circle cx="1473.2" cy="939.6" r="2.8" fill="#24262d" stroke="none"/><circle cx="1483.4" cy="939.6" r="2.8" fill="#24262d" stroke="none"/><circle cx="1493.6000000000001" cy="939.6" r="2.8" fill="#24262d" stroke="none"/></svg>
<span class="t" style="left:494.30px;top:983.00px;font-size:21.25px;line-height:21.25px;font-weight:400;color:#5b5d63;transform:scale(1.0017,0.9733);transform-origin:0 17px;">May 08, 2024 – Jun 06, 2024 • Aggregated by day</span>
<div style="left:1395.00px;top:979.70px;width:114.90px;height:26.20px;box-sizing:border-box;border:1.2px solid #cfcfd3;border-radius:10px;background:#fff;"></div>
<span class="t" style="left:1400.55px;top:984.00px;font-size:18.50px;line-height:18.50px;font-weight:700;color:#1e2027;transform:scale(1.0454,0.9769);transform-origin:0 15px;">LISTENING</span>
<div class="card" style="left:1553px;top:901.6px;width:1058.6px;height:797.9px;"></div>
<div class="card" style="left:1553px;top:1722px;width:1058.6px;height:60px;"></div>
<span class="t" style="left:1574.31px;top:927.00px;font-size:24.75px;line-height:24.75px;font-weight:700;color:#1e2027;transform:scale(0.9866,1.0000);transform-origin:0 20px;">Mentions trend</span>
<svg style="left:1760.70px;top:923.60px" width="32.00" height="32.00" viewBox="1760.70 923.60 32.00 32.00" fill="none" stroke="#24262d" stroke-width="2" stroke-linecap="round" stroke-linejoin="round" ><circle cx="1776.7" cy="939.6" r="13.3" stroke-width="1.75"/><path d="M1771.9 935.5A4.85 4.4 0 1 1 1778.3 939.95Q1776.4 940.2 1776.45 942.2" stroke-width="1.8"/><circle cx="1776.65" cy="946.7" r="1.65" fill="#24262d" stroke="none"/></svg>
<svg style="left:2548.40px;top:934.60px" width="32.00" height="10.00" viewBox="2548.40 934.60 32.00 10.00" fill="none" stroke="#24262d" stroke-width="2" stroke-linecap="round" stroke-linejoin="round" ><circle cx="2553.2000000000003" cy="939.6" r="2.8" fill="#24262d" stroke="none"/><circle cx="2563.4" cy="939.6" r="2.8" fill="#24262d" stroke="none"/><circle cx="2573.6" cy="939.6" r="2.8" fill="#24262d" stroke="none"/></svg>
<span class="t" style="left:1574.30px;top:983.00px;font-size:21.25px;line-height:21.25px;font-weight:400;color:#5b5d63;transform:scale(1.0017,0.9733);transform-origin:0 17px;">May 08, 2024 – Jun 06, 2024 • Aggregated by day</span>
<div style="left:2475.00px;top:979.70px;width:114.90px;height:26.20px;box-sizing:border-box;border:1.2px solid #cfcfd3;border-radius:10px;background:#fff;"></div>
<span class="t" style="left:2480.55px;top:984.00px;font-size:18.50px;line-height:18.50px;font-weight:700;color:#1e2027;transform:scale(1.0454,0.9769);transform-origin:0 15px;">LISTENING</span>
<span class="t" style="left:582.80px;top:1608.00px;font-size:21.00px;line-height:21.00px;font-weight:400;color:#2a2f3d;letter-spacing:1.150px;transform:scale(1.0000,1.0286);transform-origin:0 18px;">0</span>
<svg style="left:607.8px;top:1536.1px" width="890.4" height="4" viewBox="0 0 890.4 4"><line x1="1.4" y1="2" x2="888.4" y2="2" stroke="#c3c8cc" stroke-width="1.8" stroke-dasharray="1.8 7.2" /></svg>
<span class="t" style="left:569.97px;top:1528.00px;font-size:21.00px;line-height:21.00px;font-weight:400;color:#2a2f3d;letter-spacing:1.150px;transform:scale(1.0000,1.0286);transform-origin:0 18px;">50</span>
<svg style="left:607.8px;top:1455.6px" width="890.4" height="4" viewBox="0 0 890.4 4"><line x1="1.4" y1="2" x2="888.4" y2="2" stroke="#c3c8cc" stroke-width="1.8" stroke-dasharray="1.8 7.2" /></svg>
<span class="t" style="left:557.14px;top:1447.00px;font-size:21.00px;line-height:21.00px;font-weight:400;color:#2a2f3d;letter-spacing:1.150px;transform:scale(1.0000,1.0286);transform-origin:0 18px;">100</span>
<svg style="left:607.8px;top:1375.1px" width="890.4" height="4" viewBox="0 0 890.4 4"><line x1="1.4" y1="2" x2="888.4" y2="2" stroke="#c3c8cc" stroke-width="1.8" stroke-dasharray="1.8 7.2" /></svg>
<span class="t" style="left:557.14px;top:1366.00px;font-size:21.00px;line-height:21.00px;font-weight:400;color:#2a2f3d;letter-spacing:1.150px;transform:scale(1.0000,1.0286);transform-origin:0 18px;">150</span>
<svg style="left:607.8px;top:1294.6px" width="890.4" height="4" viewBox="0 0 890.4 4"><line x1="1.4" y1="2" x2="888.4" y2="2" stroke="#c3c8cc" stroke-width="1.8" stroke-dasharray="1.8 7.2" /></svg>
<span class="t" style="left:557.14px;top:1286.00px;font-size:21.00px;line-height:21.00px;font-weight:400;color:#2a2f3d;letter-spacing:1.150px;transform:scale(1.0000,1.0286);transform-origin:0 18px;">200</span>
<svg style="left:607.8px;top:1214.1px" width="890.4" height="4" viewBox="0 0 890.4 4"><line x1="1.4" y1="2" x2="888.4" y2="2" stroke="#c3c8cc" stroke-width="1.8" stroke-dasharray="1.8 7.2" /></svg>
<span class="t" style="left:557.14px;top:1206.00px;font-size:21.00px;line-height:21.00px;font-weight:400;color:#2a2f3d;letter-spacing:1.150px;transform:scale(1.0000,1.0286);transform-origin:0 18px;">250</span>
<svg style="left:607.8px;top:1133.6px" width="890.4" height="4" viewBox="0 0 890.4 4"><line x1="1.4" y1="2" x2="888.4" y2="2" stroke="#c3c8cc" stroke-width="1.8" stroke-dasharray="1.8 7.2" /></svg>
<span class="t" style="left:557.14px;top:1125.00px;font-size:21.00px;line-height:21.00px;font-weight:400;color:#2a2f3d;letter-spacing:1.150px;transform:scale(1.0000,1.0286);transform-origin:0 18px;">300</span>
<div style="left:607.80px;top:1618.40px;width:889.00px;height:2.00px;background:#cfcfd3;"></div>
<div style="left:765.80px;top:1618.60px;width:1.80px;height:13.40px;background:#c6c6cb;"></div>
<span class="t" style="left:733.14px;top:1642.00px;font-size:21.25px;line-height:21.25px;font-weight:400;color:#2a2f3d;transform:scale(0.9607,0.9733);transform-origin:0 17px;">May 13</span>
<div style="left:965.20px;top:1618.60px;width:1.80px;height:13.40px;background:#c6c6cb;"></div>
<span class="t" style="left:931.00px;top:1642.00px;font-size:21.25px;line-height:21.25px;font-weight:400;color:#2a2f3d;transform:scale(1.0049,0.9733);transform-origin:0 17px;">May 20</span>
<div style="left:1165.10px;top:1618.60px;width:1.80px;height:13.40px;background:#c6c6cb;"></div>
<span class="t" style="left:1131.82px;top:1642.00px;font-size:21.25px;line-height:21.25px;font-weight:400;color:#2a2f3d;transform:scale(0.9784,0.9733);transform-origin:0 17px;">May 27</span>
<div style="left:1364.90px;top:1618.60px;width:1.80px;height:13.40px;background:#c6c6cb;"></div>
<span class="t" style="left:1340.70px;top:1642.00px;font-size:21.25px;line-height:21.25px;font-weight:400;color:#2a2f3d;transform:scale(0.9811,0.9733);transform-origin:0 17px;">Jun 3</span>
<div style="left:1125.00px;top:1067.00px;width:25.60px;height:550.40px;background:#424fb4;border-radius:3.4px;"></div>
<div style="left:1153.50px;top:1176.10px;width:25.60px;height:441.30px;background:#424fb4;border-radius:3.4px;"></div>
<div style="left:1182.00px;top:1604.60px;width:25.60px;height:12.80px;background:#424fb4;border-radius:3.4px;"></div>
<div style="left:1239.00px;top:1616.40px;width:25.60px;height:1.00px;background:#e3e4f1;border-radius:0.5px;"></div>
<div style="left:1267.40px;top:1616.60px;width:25.60px;height:0.80px;background:#eaebf4;border-radius:0.40000000000009095px;"></div>
<div style="left:1438.70px;top:1583.70px;width:25.60px;height:33.70px;background:#424fb4;border-radius:3.4px;"></div>
<div style="left:1467.30px;top:1492.20px;width:25.60px;height:125.20px;background:#424fb4;border-radius:3.4px;"></div>
<span class="t" style="left:506.10px;top:1431.80px;font-size:21.00px;line-height:21.00px;font-weight:400;color:#76787e;letter-spacing:0.205px;transform:rotate(-90deg) scaleX(1.0000);transform-origin:0 0;">Number of authors</span>
<span class="t" style="left:1663.00px;top:1608.00px;font-size:21.00px;line-height:21.00px;font-weight:400;color:#2a2f3d;letter-spacing:1.150px;transform:scale(1.0000,1.0286);transform-origin:0 18px;">0</span>
<svg style="left:1688.0px;top:1536.4px" width="890.4" height="4" viewBox="0 0 890.4 4"><line x1="1.4" y1="2" x2="888.4" y2="2" stroke="#c3c8cc" stroke-width="1.8" stroke-dasharray="1.8 7.2" /></svg>
<span class="t" style="left:1637.34px;top:1528.00px;font-size:21.00px;line-height:21.00px;font-weight:400;color:#2a2f3d;letter-spacing:1.150px;transform:scale(1.0000,1.0286);transform-origin:0 18px;">100</span>
<svg style="left:1688.0px;top:1456.3px" width="890.4" height="4" viewBox="0 0 890.4 4"><line x1="1.4" y1="2" x2="888.4" y2="2" stroke="#c3c8cc" stroke-width="1.8" stroke-dasharray="1.8 7.2" /></svg>
<span class="t" style="left:1637.34px;top:1448.00px;font-size:21.00px;line-height:21.00px;font-weight:400;color:#2a2f3d;letter-spacing:1.150px;transform:scale(1.0000,1.0286);transform-origin:0 18px;">200</span>
<svg style="left:1688.0px;top:1376.1px" width="890.4" height="4" viewBox="0 0 890.4 4"><line x1="1.4" y1="2" x2="888.4" y2="2" stroke="#c3c8cc" stroke-width="1.8" stroke-dasharray="1.8 7.2" /></svg>
<span class="t" style="left:1637.34px;top:1368.00px;font-size:21.00px;line-height:21.00px;font-weight:400;color:#2a2f3d;letter-spacing:1.150px;transform:scale(1.0000,1.0286);transform-origin:0 18px;">300</span>
<svg style="left:1688.0px;top:1296.0px" width="890.4" height="4" viewBox="0 0 890.4 4"><line x1="1.4" y1="2" x2="888.4" y2="2" stroke="#c3c8cc" stroke-width="1.8" stroke-dasharray="1.8 7.2" /></svg>
<span class="t" style="left:1637.34px;top:1287.00px;font-size:21.00px;line-height:21.00px;font-weight:400;color:#2a2f3d;letter-spacing:1.150px;transform:scale(1.0000,1.0286);transform-origin:0 18px;">400</span>
<svg style="left:1688.0px;top:1215.8px" width="890.4" height="4" viewBox="0 0 890.4 4"><line x1="1.4" y1="2" x2="888.4" y2="2" stroke="#c3c8cc" stroke-width="1.8" stroke-dasharray="1.8 7.2" /></svg>
<span class="t" style="left:1637.34px;top:1207.00px;font-size:21.00px;line-height:21.00px;font-weight:400;color:#2a2f3d;letter-spacing:1.150px;transform:scale(1.0000,1.0286);transform-origin:0 18px;">500</span>
<svg style="left:1688.0px;top:1135.7px" width="890.4" height="4" viewBox="0 0 890.4 4"><line x1="1.4" y1="2" x2="888.4" y2="2" stroke="#c3c8cc" stroke-width="1.8" stroke-dasharray="1.8 7.2" /></svg>
<span class="t" style="left:1637.34px;top:1127.00px;font-size:21.00px;line-height:21.00px;font-weight:400;color:#2a2f3d;letter-spacing:1.150px;transform:scale(1.0000,1.0286);transform-origin:0 18px;">600</span>
<div style="left:1688.00px;top:1618.40px;width:889.00px;height:2.00px;background:#cfcfd3;"></div>
<div style="left:1846.00px;top:1618.60px;width:1.80px;height:13.40px;background:#c6c6cb;"></div>
<span class="t" style="left:1813.34px;top:1642.00px;font-size:21.25px;line-height:21.25px;font-weight:400;color:#2a2f3d;transform:scale(0.9607,0.9733);transform-origin:0 17px;">May 13</span>
<div style="left:2045.40px;top:1618.60px;width:1.80px;height:13.40px;background:#c6c6cb;"></div>
<span class="t" style="left:2011.20px;top:1642.00px;font-size:21.25px;line-height:21.25px;font-weight:400;color:#2a2f3d;transform:scale(1.0049,0.9733);transform-origin:0 17px;">May 20</span>
<div style="left:2245.30px;top:1618.60px;width:1.80px;height:13.40px;background:#c6c6cb;"></div>
<span class="t" style="left:2212.02px;top:1642.00px;font-size:21.25px;line-height:21.25px;font-weight:400;color:#2a2f3d;transform:scale(0.9784,0.9733);transform-origin:0 17px;">May 27</span>
<div style="left:2445.10px;top:1618.60px;width:1.80px;height:13.40px;background:#c6c6cb;"></div>
<span class="t" style="left:2420.90px;top:1642.00px;font-size:21.25px;line-height:21.25px;font-weight:400;color:#2a2f3d;transform:scale(0.9811,0.9733);transform-origin:0 17px;">Jun 3</span>
<div style="left:2205.20px;top:1067.00px;width:25.60px;height:550.40px;background:#424fb4;border-radius:3.4px;"></div>
<div style="left:2233.70px;top:1377.40px;width:25.60px;height:240.00px;background:#424fb4;border-radius:3.4px;"></div>
<div style="left:2262.20px;top:1612.20px;width:25.60px;height:5.20px;background:#424fb4;border-radius:2.6000000000000227px;"></div>
<div style="left:2319.20px;top:1615.60px;width:25.60px;height:1.80px;background:#9aa0d4;border-radius:0.900000000000091px;"></div>
<div style="left:2347.60px;top:1616.40px;width:25.60px;height:1.00px;background:#e3e4f1;border-radius:0.5px;"></div>
<div style="left:2518.90px;top:1593.50px;width:25.60px;height:23.90px;background:#424fb4;border-radius:3.4px;"></div>
<div style="left:2547.50px;top:1513.50px;width:25.60px;height:103.90px;background:#424fb4;border-radius:3.4px;"></div>
<span class="t" style="left:1586.30px;top:1438.80px;font-size:21.00px;line-height:21.00px;font-weight:400;color:#76787e;letter-spacing:0.119px;transform:rotate(-90deg) scaleX(1.0000);transform-origin:0 0;">Number of mentions</span>
<div style="left:2266.70px;top:556.10px;width:324.60px;height:303.10px;background:#fff;border-radius:11px;box-shadow:0 2px 6px rgba(20,20,40,.22),0 8px 22px rgba(20,20,40,.14);"></div>
<div style="left:2289.00px;top:578.20px;width:280.00px;height:53.80px;background:#e9e9ea;border-radius:13px;"></div>
<svg style="left:2312.00px;top:587.00px" width="34.00" height="34.00" viewBox="2312.00 587.00 34.00 34.00" fill="none" stroke="#24262d" stroke-width="1.9" stroke-linecap="round" stroke-linejoin="round" ><path d="M2328.7 592.3H2319.6A4 4 0 0 0 2315.6 596.3V611.7A4 4 0 0 0 2319.6 615.7H2334.8A4 4 0 0 0 2338.8 611.7V602.7"/><path d="M2318.7 610.5H2335.7"/><rect x="2319.2" y="596.2" width="3.4" height="3.4" rx="1.2"/><path d="M2332.8 590.1H2340.8V598.4M2340.8 590.1L2331.2 599.7"/></svg>
<span class="t" style="left:2348.97px;top:592.00px;font-size:24.75px;line-height:24.75px;font-weight:400;color:#1e2027;transform:scale(1.0260,1.0000);transform-origin:0 20px;">Click to content</span>
<div style="left:2289.00px;top:653.00px;width:280.00px;height:1.20px;background:#dcdcdf;"></div>
<svg style="left:2312.00px;top:686.40px" width="30.00" height="34.00" viewBox="2312.00 686.40 30.00 34.00" fill="none" stroke="#24262d" stroke-width="1.9" stroke-linecap="round" stroke-linejoin="round" ><path d="M2317.3 698.9V693.3A3.9 3.9 0 0 1 2321.2 689.4H2331.2L2337.2 695.4V699.1999999999999"/><path d="M2329.8 689.6V694.3A2.2 2.2 0 0 0 2332 696.5H2337"/><path d="M2316.6 716.8H2337.6"/></svg>
<span class="t" style="left:2316.60px;top:702.00px;font-size:11.75px;line-height:11.75px;font-weight:700;color:#1e2027;transform:scale(0.7780,1.0500);transform-origin:0 10px;">PNG</span>
<span class="t" style="left:2348.02px;top:691.00px;font-size:24.75px;line-height:24.75px;font-weight:400;color:#1e2027;transform:scale(0.9923,1.0000);transform-origin:0 20px;">Export PNG</span>
<svg style="left:2312.00px;top:740.30px" width="30.00" height="34.00" viewBox="2312.00 740.30 30.00 34.00" fill="none" stroke="#24262d" stroke-width="1.9" stroke-linecap="round" stroke-linejoin="round" ><path d="M2317.3 752.8V747.1999999999999A3.9 3.9 0 0 1 2321.2 743.3H2331.2L2337.2 749.3V753.0999999999999"/><path d="M2329.8 743.5V748.1999999999999A2.2 2.2 0 0 0 2332 750.4H2337"/><path d="M2316.6 770.6999999999999H2337.6"/></svg>
<span class="t" style="left:2311.80px;top:756.00px;font-size:11.75px;line-height:11.75px;font-weight:700;color:#1e2027;transform:scale(0.9173,1.0500);transform-origin:0 10px;">XLSX</span>
<span class="t" style="left:2348.04px;top:744.00px;font-size:24.75px;line-height:24.75px;font-weight:400;color:#1e2027;transform:scale(0.9800,1.0000);transform-origin:0 20px;">Export XLSX</span>
<svg style="left:2312.00px;top:794.20px" width="30.00" height="34.00" viewBox="2312.00 794.20 30.00 34.00" fill="none" stroke="#24262d" stroke-width="1.9" stroke-linecap="round" stroke-linejoin="round" ><path d="M2317.3 806.7V801.1A3.9 3.9 0 0 1 2321.2 797.2H2331.2L2337.2 803.2V807.0"/><path d="M2329.8 797.4000000000001V802.1A2.2 2.2 0 0 0 2332 804.3000000000001H2337"/><path d="M2316.6 824.6H2337.6"/></svg>
<span class="t" style="left:2315.90px;top:810.00px;font-size:11.75px;line-height:11.75px;font-weight:700;color:#1e2027;transform:scale(0.8511,1.0500);transform-origin:0 10px;">CSV</span>
<span class="t" style="left:2348.04px;top:799.00px;font-size:24.75px;line-height:24.75px;font-weight:400;color:#1e2027;transform:scale(0.9782,1.0000);transform-origin:0 20px;">Export CSV</span>
<div style="left:2254.20px;top:548.20px;width:353.40px;height:319.80px;box-sizing:border-box;border:6.4px solid #d91c2c;border-radius:29px;"></div>
</div></body></html>
